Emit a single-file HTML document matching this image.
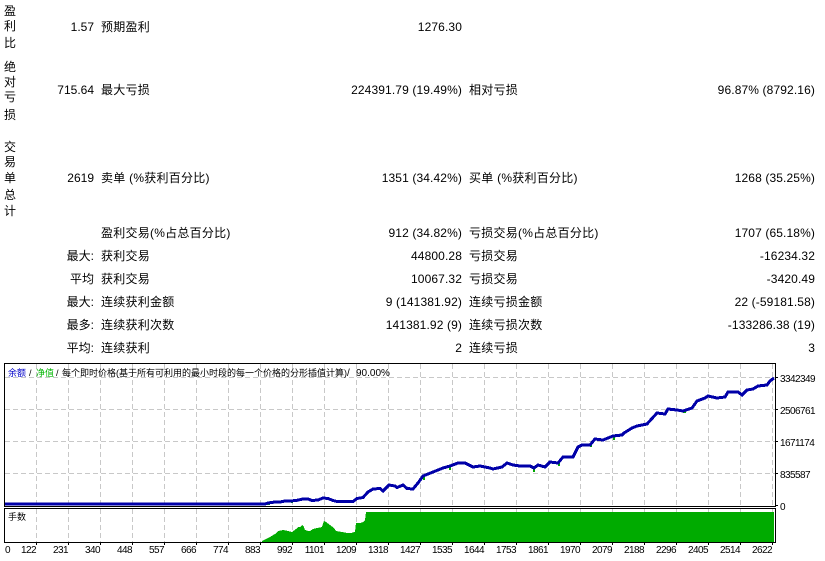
<!DOCTYPE html>
<html>
<head>
<meta charset="utf-8">
<style>
html,body{margin:0;padding:0;background:#fff;}
#p{position:relative;width:825px;height:561px;overflow:hidden;background:#fff;color:#000;
font-family:"Liberation Sans","Noto Sans CJK SC",sans-serif;font-size:12px;line-height:16px;}
.t{position:absolute;white-space:nowrap;height:16px;}
.r{text-align:right;}
.a{width:120px;left:-26px;}
.b{left:101px;letter-spacing:.25px;}
.c{width:200px;left:262px;letter-spacing:.12px;}
.d{left:469px;letter-spacing:.25px;}
.e{width:200px;left:615px;letter-spacing:.12px;}
svg{position:absolute;left:0;top:0;}
svg text{font-family:"Liberation Sans","Noto Sans CJK SC",sans-serif;}
</style>
</head>
<body>
<div id="p">
<div class="t" style="left:4px;top:3px">盈</div>
<div class="t" style="left:4px;top:18px">利</div>
<div class="t" style="left:4px;top:35px">比</div>
<div class="t" style="left:4px;top:59px">绝</div>
<div class="t" style="left:4px;top:74px">对</div>
<div class="t" style="left:4px;top:89px">亏</div>
<div class="t" style="left:4px;top:107px">损</div>
<div class="t" style="left:4px;top:139px">交</div>
<div class="t" style="left:4px;top:154px">易</div>
<div class="t" style="left:4px;top:170px">单</div>
<div class="t" style="left:4px;top:187px">总</div>
<div class="t" style="left:4px;top:203px">计</div>

<div class="t r a" style="top:19px">1.57</div><div class="t b" style="top:19px">预期盈利</div><div class="t r c" style="top:19px">1276.30</div>
<div class="t r a" style="top:82px">715.64</div><div class="t b" style="top:82px">最大亏损</div><div class="t r c" style="top:82px">224391.79 (19.49%)</div><div class="t d" style="top:82px">相对亏损</div><div class="t r e" style="top:82px">96.87% (8792.16)</div>
<div class="t r a" style="top:170px">2619</div><div class="t b" style="top:170px">卖单 (%获利百分比)</div><div class="t r c" style="top:170px">1351 (34.42%)</div><div class="t d" style="top:170px">买单 (%获利百分比)</div><div class="t r e" style="top:170px">1268 (35.25%)</div>
<div class="t b" style="top:225px">盈利交易(%占总百分比)</div><div class="t r c" style="top:225px">912 (34.82%)</div><div class="t d" style="top:225px">亏损交易(%占总百分比)</div><div class="t r e" style="top:225px">1707 (65.18%)</div>
<div class="t r a" style="top:248px">最大:</div><div class="t b" style="top:248px">获利交易</div><div class="t r c" style="top:248px">44800.28</div><div class="t d" style="top:248px">亏损交易</div><div class="t r e" style="top:248px">-16234.32</div>
<div class="t r a" style="top:271px">平均</div><div class="t b" style="top:271px">获利交易</div><div class="t r c" style="top:271px">10067.32</div><div class="t d" style="top:271px">亏损交易</div><div class="t r e" style="top:271px">-3420.49</div>
<div class="t r a" style="top:294px">最大:</div><div class="t b" style="top:294px">连续获利金额</div><div class="t r c" style="top:294px">9 (141381.92)</div><div class="t d" style="top:294px">连续亏损金额</div><div class="t r e" style="top:294px">22 (-59181.58)</div>
<div class="t r a" style="top:317px">最多:</div><div class="t b" style="top:317px">连续获利次数</div><div class="t r c" style="top:317px">141381.92 (9)</div><div class="t d" style="top:317px">连续亏损次数</div><div class="t r e" style="top:317px">-133286.38 (19)</div>
<div class="t r a" style="top:340px">平均:</div><div class="t b" style="top:340px">连续获利</div><div class="t r c" style="top:340px">2</div><div class="t d" style="top:340px">连续亏损</div><div class="t r e" style="top:340px">3</div>

<svg width="825" height="561" viewBox="0 0 825 561" shape-rendering="crispEdges">
<path d="M36.5 364V506M68.5 364V506M100.5 364V506M132.5 364V506M164.5 364V506M196.5 364V506M228.5 364V506M260.5 364V506M292.5 364V506M324.5 364V506M356.5 364V506M388.5 364V506M420.5 364V506M452.5 364V506M484.5 364V506M516.5 364V506M548.5 364V506M580.5 364V506M612.5 364V506M644.5 364V506M676.5 364V506M708.5 364V506M740.5 364V506M772.5 364V506M36.5 509V542M68.5 509V542M100.5 509V542M132.5 509V542M164.5 509V542M196.5 509V542M228.5 509V542M260.5 509V542M292.5 509V542M324.5 509V542M356.5 509V542M388.5 509V542M420.5 509V542M452.5 509V542M484.5 509V542M516.5 509V542M548.5 509V542M580.5 509V542M612.5 509V542M644.5 509V542M676.5 509V542M708.5 509V542M740.5 509V542M772.5 509V542M5 377.5H775M5 409.5H775M5 441.5H775M5 473.5H775" stroke="#c8c8c8" stroke-width="1" stroke-dasharray="5 3" fill="none"/>

<path d="M262 542V541L270 537L275 534L278 531L283 530L288 531L292 532L296 529L298 527L300 527L302 525L304 527L305 530L308 531L310 531L313 529L317 528L322 527L323 524L324 521L326 522L330 525L334 528L336 531L342 532L347 533L351 533L354 532L355 532L356 523L360 523L363 522L365 520L366 512H774V542Z" fill="#00ab00"/>

<path d="M267 503h3v2h-3zM277 501h2v2h-2zM291 500h2v3h-2zM423 477h2v3h-2zM449 467h2v3h-2zM533 469h2v3h-2zM558 463h2v3h-2zM590 444h2v3h-2zM613 437h2v3h-2zM683 411h3v2h-3zM752 388h2v2h-2z" fill="#00a800"/>
<path d="M5 504H265L268 503L275 502L280 502L285 501L290 501L296 500.5L303 499L308 499L312 500.5L318 500L323 498L328 498.5L333 500.5L337 501.5L353 501.5L357 498.5L363 497.5L368 492L373 489L380 488.5L383 491L389 485L395 486L397 487.5L403 485L407 488.5L413 489L418 483L423 476L433 472L443 468L450 466L458 463L465 463L473 467L480 466L490 468L493 469L502 467L507 463L513 465L520 466L530 466L534 468L538 465L545 467L550 462L558 463L563 457L573 457L578 447L582 445L590 445L595 439L603 440L613 436L622 435L624 433L632 428L637 426L647 424L657 413L665 414L668 409L677 410L683 411L692 408L697 401L705 398L708 396L717 398L725 397L728 392L738 392L742 395L747 390L753 389L758 386L767 385L770 381L774 378" fill="none" stroke="#0000a8" stroke-width="3" stroke-linejoin="miter"/>

<rect x="4.5" y="363.5" width="771" height="143" fill="none" stroke="#000"/>
<rect x="4.5" y="508.5" width="771" height="34" fill="none" stroke="#000"/>
<path d="M776 377.5h2M776 409.5h2M776 441.5h2M776 473.5h2M776 505.5h2M36.5 543v2M68.5 543v2M100.5 543v2M132.5 543v2M164.5 543v2M196.5 543v2M228.5 543v2M260.5 543v2M292.5 543v2M324.5 543v2M356.5 543v2M388.5 543v2M420.5 543v2M452.5 543v2M484.5 543v2M516.5 543v2M548.5 543v2M580.5 543v2M612.5 543v2M644.5 543v2M676.5 543v2M708.5 543v2M740.5 543v2M772.5 543v2" stroke="#000" stroke-width="1" fill="none"/>

<g font-size="10" shape-rendering="auto">
<text x="8" y="376" font-size="9" fill="#0000c8">余额</text>
<text x="29" y="376" font-size="9" fill="#000">/</text>
<text x="36" y="376" font-size="9" fill="#00b400">净值</text>
<text x="56" y="376" font-size="9" fill="#000">/</text>
<text x="62" y="376" font-size="9" fill="#000">每个即时价格(基于所有可利用的最小时段的每一个价格的分形插值计算)</text>
<text x="347" y="376" font-size="10" fill="#000">/</text>
<text x="356" y="376" font-size="10" fill="#000">90.00%</text>
<text x="8" y="520" font-size="9" fill="#000">手数</text>

<g text-anchor="start" fill="#000" letter-spacing="-.56">
<text x="780" y="382">3342349</text>
<text x="780" y="414">2506761</text>
<text x="780" y="446">1671174</text>
<text x="780" y="478">835587</text>
<text x="780" y="510">0</text>
</g>
<g text-anchor="end" fill="#000" letter-spacing="-.56">
<text x="10" y="553">0</text>
<text x="36" y="553">122</text>
<text x="68" y="553">231</text>
<text x="100" y="553">340</text>
<text x="132" y="553">448</text>
<text x="164" y="553">557</text>
<text x="196" y="553">666</text>
<text x="228" y="553">774</text>
<text x="260" y="553">883</text>
<text x="292" y="553">992</text>
<text x="324" y="553">1101</text>
<text x="356" y="553">1209</text>
<text x="388" y="553">1318</text>
<text x="420" y="553">1427</text>
<text x="452" y="553">1535</text>
<text x="484" y="553">1644</text>
<text x="516" y="553">1753</text>
<text x="548" y="553">1861</text>
<text x="580" y="553">1970</text>
<text x="612" y="553">2079</text>
<text x="644" y="553">2188</text>
<text x="676" y="553">2296</text>
<text x="708" y="553">2405</text>
<text x="740" y="553">2514</text>
<text x="772" y="553">2622</text>
</g>
</g>
</svg>
</div>
</body>
</html>
